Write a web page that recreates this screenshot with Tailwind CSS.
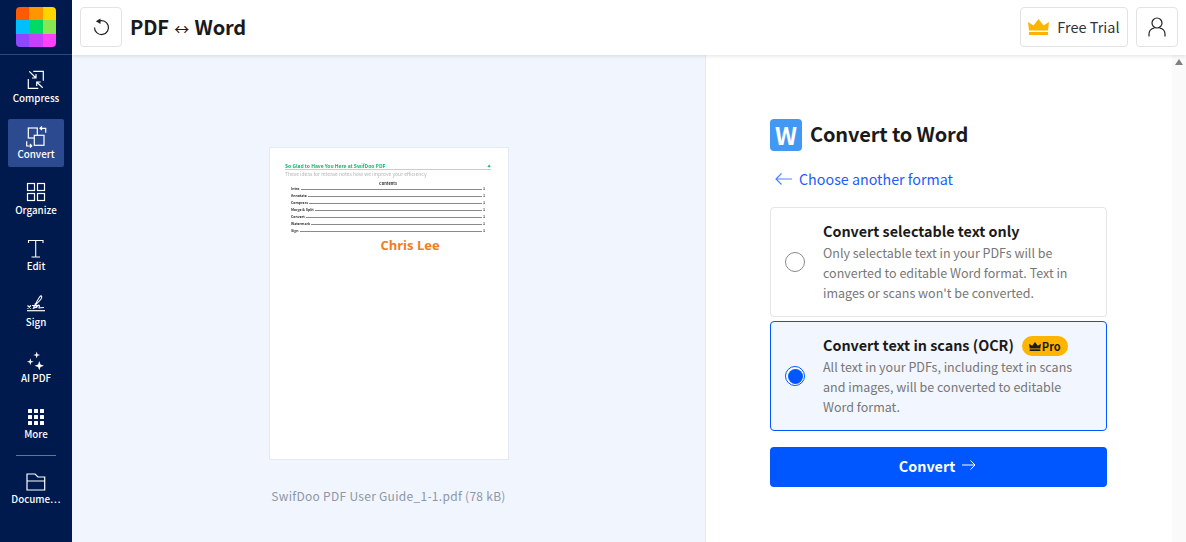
<!DOCTYPE html>
<html lang="en">
<head>
    <meta charset="UTF-8">
    <title>PDF to Word</title>
    <script src="https://cdn.jsdelivr.net/npm/@tailwindcss/browser@4"></script>
</head>
<body class="overflow-hidden bg-white">
    <div class="flex h-[542px] w-[1186px] font-['Noto_Sans_CJK_SC','Noto_Sans',sans-serif] text-[#1a1a1a]">
        <!-- Sidebar -->
        <aside class="flex w-[72px] shrink-0 flex-col items-center bg-[#001a4d] text-white">
            <div class="flex h-[55px] w-full items-start justify-center border-b border-white/20 pt-[7px]">
                <div class="grid h-10 w-10 grid-cols-3 grid-rows-3 overflow-hidden rounded-[4px]">
                    <span class="bg-[#ff5a00]"></span><span class="bg-[#ff9500]"></span><span class="bg-[#ffd500]"></span>
                    <span class="bg-[#00bfff]"></span><span class="bg-[#00d964]"></span><span class="bg-[#8ae650]"></span>
                    <span class="bg-[#9147ff]"></span><span class="bg-[#c740ff]"></span><span class="bg-[#ff40ff]"></span>
                </div>
            </div>
            <nav class="flex w-14 flex-col gap-2 pt-2">
                <a class="flex h-12 flex-col items-center justify-start pt-[7px] text-[9.800px] font-medium leading-[14px]">
                    <svg class="h-[20px] w-[20px] overflow-visible" viewBox="0 0 20 20" fill="none" stroke="white" stroke-width="1.200">
                        <path d="M7.300 1.300H17.300V10.700M12.300 18.300H2.300V9"/>
                        <path d="M3.300 1.300L10 8M10 4V8H6M16.700 17.700L10.700 12M10.700 16V12H14.700"/>
                    </svg>
                    <span class="mt-[1px]">Compress</span>
                </a>
                <a class="flex h-12 flex-col items-center justify-start rounded-[2px] bg-[#2c4a8f] pt-[7px] text-[9.800px] font-medium leading-[14px]">
                    <svg class="h-[20px] w-[20px] overflow-visible" viewBox="0 0 20 20" fill="none" stroke="white" stroke-width="1.200">
                        <rect x="2.300" y="2" width="9" height="10"/><rect x="8.300" y="9.300" width="9.700" height="10" fill="#2c4a8f"/>
                        <path d="M16 0.500L14 2.300L16 4M14 2.300H19.700V6.700M0.700 15.300V20H5.700M4 18L5.700 20L4 21.500"/>
                    </svg>
                    <span class="mt-[1px]">Convert</span>
                </a>
                <a class="flex h-12 flex-col items-center justify-start pt-[7px] text-[9.800px] font-medium leading-[14px]">
                    <svg class="h-[20px] w-[20px]" viewBox="0 0 20 20" fill="none" stroke="white" stroke-width="1.200">
                        <rect x="1.500" y="1.500" width="7" height="7"/><rect x="11.500" y="1.500" width="7" height="7"/><rect x="1.500" y="11.500" width="7" height="7"/><rect x="11.500" y="11.500" width="7" height="7"/>
                    </svg>
                    <span class="mt-[1px]">Organize</span>
                </a>
                <a class="flex h-12 flex-col items-center justify-start pt-[7px] text-[9.800px] font-medium leading-[14px]">
                    <svg class="h-[20px] w-[20px]" viewBox="0 0 20 20" fill="none" stroke="white" stroke-width="1.100">
                        <path d="M2.500 5V2.500H17V5M9.700 2.500V19M5.500 19H14"/>
                    </svg>
                    <span class="mt-[1px]">Edit</span>
                </a>
                <a class="flex h-12 flex-col items-center justify-start pt-[7px] text-[9.800px] font-medium leading-[14px]">
                    <svg class="h-[20px] w-[20px]" viewBox="0 0 20 20" fill="none" stroke="white" stroke-width="1.100">
                        <path d="M1 16.700H19" stroke-width="1.200"/><path d="M1.500 11.500L5 14.500M5 11.500L1.500 14.500"/>
                        <path d="M7 15C9 11 12 5 14 2.500C15.500 1 16.500 2.500 15 5C13 8 10 10 8 12.500C7 14.500 9 14.500 12 11.500C13 10.500 14 11.500 13 13.500C12.500 14.500 15 13.500 18 13.500"/>
                        <path d="M6 11.500H12M9 9.500L11 14"/>
                    </svg>
                    <span class="mt-[1px]">Sign</span>
                </a>
                <a class="flex h-12 flex-col items-center justify-start pt-[7px] text-[9.800px] font-medium leading-[14px]">
                    <svg class="h-[20px] w-[20px]" viewBox="0 0 20 20" fill="white">
                        <path d="M10.700 1.500L11.500 4.200L14.200 5L11.500 5.800L10.700 8.500L9.900 5.800L7.200 5L9.900 4.200Z"/>
                        <path d="M4.300 8.200L5.100 10.900L7.800 11.700L5.100 12.500L4.300 15.200L3.500 12.500L0.800 11.700L3.500 10.900Z"/>
                        <path d="M13.300 11L14.500 14.500L18 15.700L14.500 16.900L13.300 20.400L12.100 16.900L8.600 15.700L12.100 14.500Z"/>
                    </svg>
                    <span class="mt-[1px]">AI PDF</span>
                </a>
                <a class="flex h-12 flex-col items-center justify-start pt-[7px] text-[9.800px] font-medium leading-[14px]">
                    <svg class="h-[20px] w-[20px]" viewBox="0 0 20 20" fill="white">
                        <rect x="2" y="3" width="4" height="4" rx="0.500"/><rect x="8" y="3" width="4" height="4" rx="0.500"/><rect x="14" y="3" width="4" height="4" rx="0.500"/>
                        <rect x="2" y="9" width="4" height="4" rx="0.500"/><rect x="8" y="9" width="4" height="4" rx="0.500"/><rect x="14" y="9" width="4" height="4" rx="0.500"/>
                        <rect x="2" y="15" width="4" height="4" rx="0.500"/><rect x="8" y="15" width="4" height="4" rx="0.500"/><rect x="14" y="15" width="4" height="4" rx="0.500"/>
                    </svg>
                    <span class="mt-[1px]">More</span>
                </a>
            </nav>
            <div class="mt-2 h-px w-10 bg-white/40"></div>
            <a class="mt-[15px] flex w-full flex-col items-center text-[9.800px] font-medium leading-[14px]">
                <svg class="h-[20px] w-[20px]" viewBox="0 0 20 20" fill="none" stroke="white" stroke-width="1.200">
                    <path d="M1 10V3H9L12 6H18.700V19H1V10H18.700"/>
                </svg>
                <span class="mt-[1px]">Docume…</span>
            </a>
        </aside>

        <div class="flex min-w-0 flex-1 flex-col">
            <!-- Header -->
            <header class="z-10 flex h-[55px] shrink-0 items-center bg-white pb-px pl-2 pr-2 shadow-[0_1px_4px_rgba(0,0,0,0.12)]">
                <button class="flex h-10 w-[42px] items-center justify-center rounded-[4px] border border-[#e3e3e3]">
                    <svg class="h-[18px] w-[18px]" viewBox="0 0 18 18" fill="none" stroke="#222" stroke-width="1.200">
                        <path d="M6 3.500A7 7 0 1 1 2.500 9.500"/><path d="M8.500 0.500V6L3.800 3.200Z" fill="#222" stroke="none"/>
                    </svg>
                </button>
                <h1 class="ml-2 text-[20px] font-bold leading-none tracking-[-0.15px]">PDF <span class="mx-[1px] text-[15px] font-normal">↔</span> Word</h1>
                <button class="ml-auto flex h-10 w-[108px] items-center justify-center gap-2 rounded-[4px] border border-[#e3e3e3] text-[14.500px] text-[#333]">
                    <svg class="h-[16px] w-[21px]" viewBox="0 0 21 16" fill="#ffb400">
                        <path d="M1 11.500L0 3L5.500 6.500L10.500 0L15.500 6.500L21 3L20 11.500Z"/><rect x="1" y="13" width="19" height="3"/>
                    </svg>
                    Free Trial
                </button>
                <button class="ml-2 flex h-10 w-[42px] items-center justify-center rounded-[4px] border border-[#e3e3e3]">
                    <svg class="h-[20px] w-[18px]" viewBox="0 0 18 20" fill="none" stroke="#222" stroke-width="1.200">
                        <circle cx="9" cy="6" r="5"/><path d="M1 19.500V17C1 13.500 4 11.500 6.500 11M17 19.500V17C17 13.500 14 11.500 11.500 11"/>
                    </svg>
                </button>
            </header>

            <main class="flex min-h-0 flex-1">
                <!-- Preview -->
                <section class="flex w-[633px] shrink-0 flex-col items-center bg-[#f1f5fd] pt-[92px]">
                    <div class="ml-px h-[313px] w-[240px] border border-[#e4e9f2] bg-white pl-[15px] pr-[17px] pt-[14px]">
                        <div class="blur-[0.3px]">
                            <div class="flex items-center justify-between border-b border-[#9fe3c4] text-[5px] font-bold leading-[7px] text-[#12b76a]">
                                <span>So Glad to Have You Here at SwifDoo PDF</span><span>✦</span>
                            </div>
                            <p class="text-[5px] leading-[7px] text-[#b5b5b5]">These ideas for release notes how we improve your efficiency</p>
                            <p class="mt-[3px] text-center text-[4px] font-bold leading-[6px] text-[#333]">Contents</p>
                            <div class="flex flex-col gap-[2px] px-[6px]">
                                <div class="flex h-[5px] items-end gap-px text-[3.500px] font-bold leading-[4px] text-[#333]"><span>Intro</span><span class="mb-px h-px flex-1 bg-[#8a8a8a]"></span><span>1</span></div>
                                <div class="flex h-[5px] items-end gap-px text-[3.500px] font-bold leading-[4px] text-[#333]"><span>Annotate</span><span class="mb-px h-px flex-1 bg-[#8a8a8a]"></span><span>1</span></div>
                                <div class="flex h-[5px] items-end gap-px text-[3.500px] font-bold leading-[4px] text-[#333]"><span>Compress</span><span class="mb-px h-px flex-1 bg-[#8a8a8a]"></span><span>1</span></div>
                                <div class="flex h-[5px] items-end gap-px text-[3.500px] font-bold leading-[4px] text-[#333]"><span>Merge &amp; Split</span><span class="mb-px h-px flex-1 bg-[#8a8a8a]"></span><span>1</span></div>
                                <div class="flex h-[5px] items-end gap-px text-[3.500px] font-bold leading-[4px] text-[#333]"><span>Convert</span><span class="mb-px h-px flex-1 bg-[#8a8a8a]"></span><span>1</span></div>
                                <div class="flex h-[5px] items-end gap-px text-[3.500px] font-bold leading-[4px] text-[#333]"><span>Watermark</span><span class="mb-px h-px flex-1 bg-[#8a8a8a]"></span><span>1</span></div>
                                <div class="flex h-[5px] items-end gap-px text-[3.500px] font-bold leading-[4px] text-[#333]"><span>Sign</span><span class="mb-px h-px flex-1 bg-[#8a8a8a]"></span><span>1</span></div>
                            </div>
                        </div>
                        <p class="mt-[2px] pl-[44px] text-center font-['Open_Sans',sans-serif] text-[13px] font-bold leading-[20px] text-[#ef7d22]">Chris Lee</p>
                    </div>
                    <p class="mt-[27px] text-[12px] leading-[18px] tracking-[0.29px] text-[#8d97a8]">SwifDoo PDF User Guide_1-1.pdf (78 kB)</p>
                </section>

                <!-- Options -->
                <section class="w-[467px] shrink-0 border-l border-[#e6e9f0] bg-white pl-[64px] pr-[65px] pt-[64px]">
                    <div class="flex h-8 items-center gap-2">
                        <span class="flex h-8 w-8 items-center justify-center rounded-[4px] bg-[#4299f5] text-[24px] font-bold leading-none text-white">W</span>
                        <h2 class="pb-[2px] text-[20px] font-bold leading-none tracking-[-0.15px]">Convert to Word</h2>
                    </div>
                    <a class="mt-[18px] flex h-[20px] items-center gap-[7px] pb-px text-[14.300px] text-[#1a5cff]">
                        <svg class="ml-[5px] h-[12px] w-[17px]" viewBox="0 0 17 12" fill="none" stroke="#4d85ff" stroke-width="1.200">
                            <path d="M17 6H1M6.500 0.500L1 6L6.500 11.500"/>
                        </svg>
                        Choose another format
                    </a>
                    <div class="mt-[18px] flex h-[110px] items-center rounded-[4px] border border-[#e5e5e5] pl-[14px] pr-3">
                        <span class="h-5 w-5 shrink-0 rounded-full border border-[#8a8a8a] bg-white"></span>
                        <div class="ml-[18px]">
                            <h3 class="text-[14.350px] font-bold leading-[20px]">Convert selectable text only</h3>
                            <p class="mt-[2px] text-[12.500px] leading-[20px] text-[#777]">Only selectable text in your PDFs will be converted to editable Word format. Text in images or scans won't be converted.</p>
                        </div>
                    </div>
                    <div class="mt-1 flex h-[110px] items-center rounded-[4px] border border-[#0057ff] bg-[#f2f6fe] pl-[14px] pr-3">
                        <span class="flex h-5 w-5 shrink-0 items-center justify-center rounded-full border border-[#0057ff] bg-white">
                            <span class="h-[15px] w-[15px] rounded-full bg-[#0057ff]"></span>
                        </span>
                        <div class="ml-[18px]">
                            <h3 class="flex items-center text-[14.350px] font-bold leading-[20px]">
                                Convert text in scans (OCR)
                                <span class="ml-2 flex h-5 w-[46px] translate-y-px items-center justify-center gap-px rounded-full bg-[#ffb400] text-[11px] font-bold">
                                    <svg class="h-[9px] w-[12px]" viewBox="0 0 21 16" fill="#1a1a1a"><path d="M1 11.500L0 3L5.500 6.500L10.500 0L15.500 6.500L21 3L20 11.500Z"/><rect x="1" y="13" width="19" height="3"/></svg>
                                    Pro
                                </span>
                            </h3>
                            <p class="mt-[2px] text-[12.500px] leading-[20px] text-[#777]">All text in your PDFs, including text in scans and images, will be converted to editable Word format.</p>
                        </div>
                    </div>
                    <button class="mt-4 flex h-10 w-full items-center justify-center gap-[7px] rounded-[4px] bg-[#0057ff] pb-[2px] pr-[2px] text-[14.350px] font-bold text-white">
                        Convert
                        <svg class="mb-[2px] h-[10px] w-[14px]" viewBox="0 0 14 10" fill="none" stroke="white" stroke-width="1"><path d="M0 5H13M8.500 0.500L13 5L8.500 9.500"/></svg>
                    </button>
                </section>

                <!-- Scrollbar -->
                <div class="flex w-[14px] shrink-0 justify-center bg-[#fafafa] pt-[4px]">
                    <span class="h-0 w-0 border-x-[4.500px] border-b-[6px] border-x-transparent border-b-[#808080]"></span>
                </div>
            </main>
        </div>
    </div>
</body>
</html>
